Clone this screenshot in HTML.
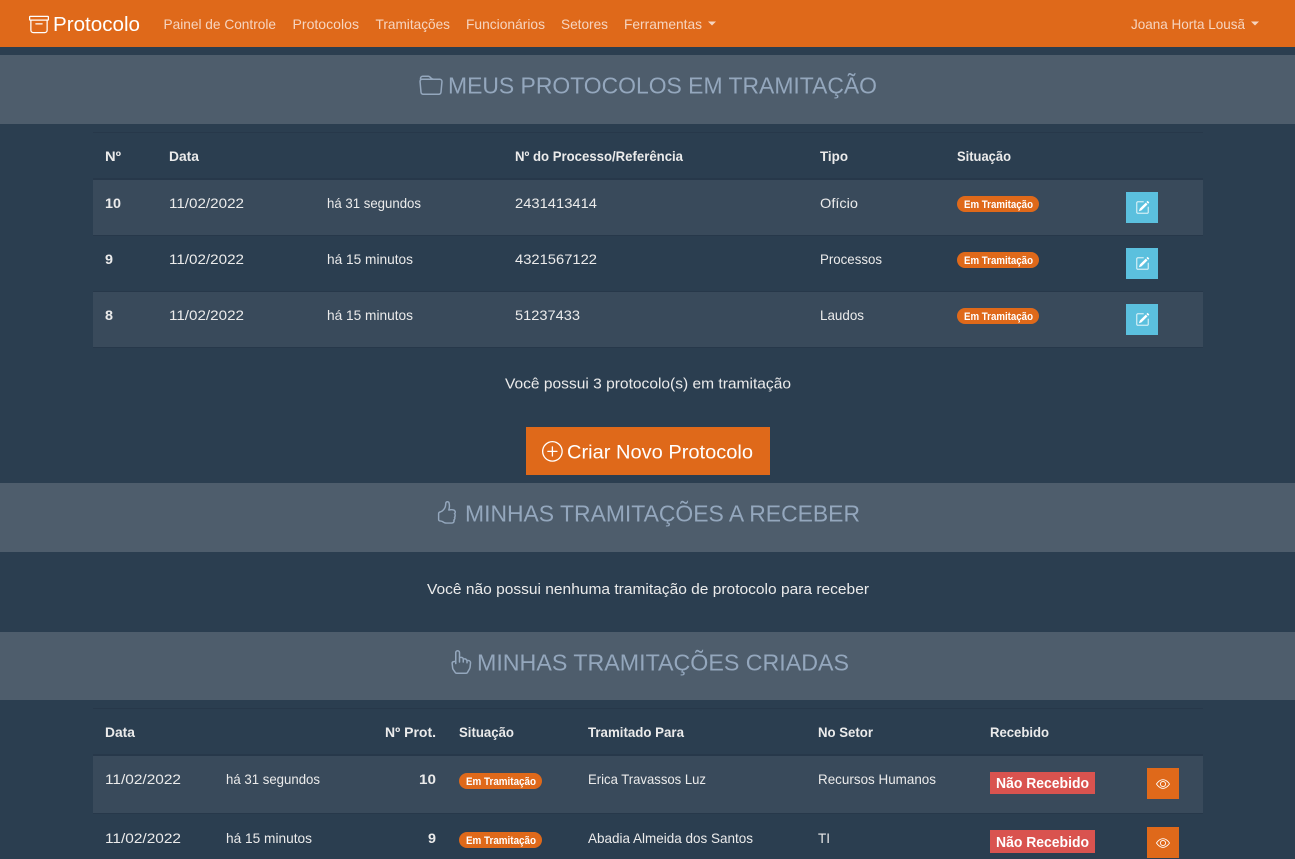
<!DOCTYPE html>
<html lang="pt-BR">
<head>
<meta charset="utf-8">
<title>Protocolo</title>
<style>
html,body{margin:0;padding:0;width:1295px;height:859px;overflow:hidden;background:#2b3e50}
svg{display:block}
text{font-family:"Liberation Sans",sans-serif;font-size:14px;fill:#ebebeb}
.n{fill:#f6d5c0}
.h{font-size:23px;fill:#94a7bd}
.b{font-weight:bold}
.t{font-size:11px;font-weight:bold;fill:#fff}
.d{font-size:15px;font-weight:bold;fill:#fff}
.m{font-size:15px}
.w{fill:#fff}
</style>
</head>
<body>
<svg width="1295" height="859" viewBox="0 0 1295 859" xmlns="http://www.w3.org/2000/svg">
<defs>
<path id="edit" fill="#fff" fill-rule="evenodd" d="M15.502 1.94a.5.5 0 0 1 0 .706L14.459 3.69l-2-2L13.502.646a.5.5 0 0 1 .707 0l1.293 1.293zm-1.75 2.456-2-2L4.939 9.21a.5.5 0 0 0-.121.196l-.805 2.414a.25.25 0 0 0 .316.316l2.414-.805a.5.5 0 0 0 .196-.12l6.813-6.814zM1 13.5A1.5 1.5 0 0 0 2.5 15h11a1.5 1.5 0 0 0 1.5-1.5v-6a.5.5 0 0 0-1 0v6a.5.5 0 0 1-.5.5h-11a.5.5 0 0 1-.5-.5v-11a.5.5 0 0 1 .5-.5H9a.5.5 0 0 0 0-1H2.5A1.5 1.5 0 0 0 1 2.5v11z"/>
<path id="eye" fill="#fff" fill-rule="evenodd" d="M16 8s-3-5.5-8-5.5S0 8 0 8s3 5.5 8 5.5S16 8 16 8zM1.173 8a13.133 13.133 0 0 1 1.66-2.043C4.12 4.668 5.88 3.5 8 3.5c2.12 0 3.879 1.168 5.168 2.457A13.133 13.133 0 0 1 14.828 8c-.058.087-.122.183-.195.288-.335.48-.83 1.12-1.465 1.755C11.879 11.332 10.119 12.5 8 12.5c-2.12 0-3.879-1.168-5.168-2.457A13.134 13.134 0 0 1 1.172 8zM8 5.5a2.5 2.5 0 1 0 0 5 2.5 2.5 0 0 0 0-5zM4.5 8a3.5 3.5 0 1 1 7 0 3.5 3.5 0 0 1-7 0z"/>
</defs>

<!-- navbar -->
<rect x="0" y="0" width="1295" height="47" fill="#df691a"/>
<g transform="translate(29,14.5) scale(1.25)"><path fill="#fff" fill-rule="evenodd" d="M0 2a1 1 0 0 1 1-1h14a1 1 0 0 1 1 1v2a1 1 0 0 1-1 1v7.5a2.5 2.5 0 0 1-2.5 2.5h-9A2.5 2.5 0 0 1 1 12.5V5a1 1 0 0 1-1-1V2zm2 3v7.5A1.5 1.5 0 0 0 3.5 14h9a1.5 1.5 0 0 0 1.5-1.5V5H2zm13-3H1v2h14V2zM5 7.5a.5.5 0 0 1 .5-.5h5a.5.5 0 0 1 0 1h-5a.5.5 0 0 1-.5-.5z"/></g>
<text x="53" y="31" style="font-size:20px" class="w" textLength="87" lengthAdjust="spacingAndGlyphs">Protocolo</text>
<text class="n" x="163.500" y="29" textLength="112.500" lengthAdjust="spacingAndGlyphs">Painel de Controle</text>
<text class="n" x="292.500" y="29" textLength="66.500" lengthAdjust="spacingAndGlyphs">Protocolos</text>
<text class="n" x="375.500" y="29" textLength="74.500" lengthAdjust="spacingAndGlyphs">Tramitações</text>
<text class="n" x="466" y="29" textLength="79" lengthAdjust="spacingAndGlyphs">Funcionários</text>
<text class="n" x="561" y="29" textLength="47" lengthAdjust="spacingAndGlyphs">Setores</text>
<text class="n" x="624" y="29" textLength="78" lengthAdjust="spacingAndGlyphs">Ferramentas</text>
<path d="M708 21.500h8l-4 4z" fill="#f6d5c0"/>
<text class="n" x="1131" y="29" textLength="114" lengthAdjust="spacingAndGlyphs">Joana Horta Lousã</text>
<path d="M1251 21.500h8l-4 4z" fill="#f6d5c0"/>

<!-- section 1 -->
<rect x="0" y="55" width="1295" height="69" fill="#4e5d6c"/>
<g transform="translate(419,74) scale(1.5)"><path fill="#94a7bd" fill-rule="evenodd" d="M.54 3.87.5 3a2 2 0 0 1 2-2h3.672a2 2 0 0 1 1.414.586l.828.828A2 2 0 0 0 9.828 3h3.982a2 2 0 0 1 1.992 2.181l-.637 7A2 2 0 0 1 13.174 14H2.826a2 2 0 0 1-1.991-1.819l-.637-7a1.99 1.99 0 0 1 .342-1.31zM2.19 4a1 1 0 0 0-.996 1.09l.637 7a1 1 0 0 0 .995.91h10.348a1 1 0 0 0 .995-.91l.637-7A1 1 0 0 0 13.81 4H2.19zm4.69-1.707A1 1 0 0 0 6.172 2H2.5a1 1 0 0 0-1 .981l.006.139C1.72 3.042 1.95 3 2.19 3h5.396l-.707-.707z"/></g>
<text class="h" x="448" y="93.500" textLength="429" lengthAdjust="spacingAndGlyphs">MEUS PROTOCOLOS EM TRAMITAÇÃO</text>

<!-- table 1 -->
<rect x="93" y="132" width="1110" height="1" fill="#27384a"/>
<rect x="93" y="178" width="1110" height="2" fill="#27384a"/>
<rect x="93" y="180" width="1110" height="55" fill="#394a5b"/>
<rect x="93" y="235" width="1110" height="1" fill="#27384a"/>
<rect x="93" y="291" width="1110" height="1" fill="#27384a"/>
<rect x="93" y="292" width="1110" height="55" fill="#394a5b"/>
<rect x="93" y="347" width="1110" height="1" fill="#27384a"/>

<text class="b" x="105" y="161" textLength="16" lengthAdjust="spacingAndGlyphs">Nº</text>
<text class="b" x="169" y="161" textLength="30" lengthAdjust="spacingAndGlyphs">Data</text>
<text class="b" x="515" y="161" textLength="168" lengthAdjust="spacingAndGlyphs">Nº do Processo/Referência</text>
<text class="b" x="820" y="161" textLength="28" lengthAdjust="spacingAndGlyphs">Tipo</text>
<text class="b" x="957" y="161" textLength="54" lengthAdjust="spacingAndGlyphs">Situação</text>

<text class="b" x="105" y="208" textLength="16" lengthAdjust="spacingAndGlyphs">10</text>
<text x="169" y="208" textLength="75" lengthAdjust="spacingAndGlyphs">11/02/2022</text>
<text x="327" y="208" textLength="94" lengthAdjust="spacingAndGlyphs">há 31 segundos</text>
<text x="515" y="208" textLength="82" lengthAdjust="spacingAndGlyphs">2431413414</text>
<text x="820" y="208" textLength="38" lengthAdjust="spacingAndGlyphs">Ofício</text>
<rect x="957" y="196" width="82" height="16" rx="8" fill="#df691a"/>
<text class="t" x="964" y="208" textLength="69" lengthAdjust="spacingAndGlyphs">Em Tramitação</text>
<rect x="1126" y="192" width="32" height="31" fill="#5bc0de"/>
<use href="#edit" transform="translate(1135.500,200.500) scale(.875)"/>

<text class="b" x="105" y="264" textLength="8" lengthAdjust="spacingAndGlyphs">9</text>
<text x="169" y="264" textLength="75" lengthAdjust="spacingAndGlyphs">11/02/2022</text>
<text x="327" y="264" textLength="86" lengthAdjust="spacingAndGlyphs">há 15 minutos</text>
<text x="515" y="264" textLength="82" lengthAdjust="spacingAndGlyphs">4321567122</text>
<text x="820" y="264" textLength="62" lengthAdjust="spacingAndGlyphs">Processos</text>
<rect x="957" y="252" width="82" height="16" rx="8" fill="#df691a"/>
<text class="t" x="964" y="264" textLength="69" lengthAdjust="spacingAndGlyphs">Em Tramitação</text>
<rect x="1126" y="248" width="32" height="31" fill="#5bc0de"/>
<use href="#edit" transform="translate(1135.500,256.500) scale(.875)"/>

<text class="b" x="105" y="320" textLength="8" lengthAdjust="spacingAndGlyphs">8</text>
<text x="169" y="320" textLength="75" lengthAdjust="spacingAndGlyphs">11/02/2022</text>
<text x="327" y="320" textLength="86" lengthAdjust="spacingAndGlyphs">há 15 minutos</text>
<text x="515" y="320" textLength="65" lengthAdjust="spacingAndGlyphs">51237433</text>
<text x="820" y="320" textLength="44" lengthAdjust="spacingAndGlyphs">Laudos</text>
<rect x="957" y="308" width="82" height="16" rx="8" fill="#df691a"/>
<text class="t" x="964" y="320" textLength="69" lengthAdjust="spacingAndGlyphs">Em Tramitação</text>
<rect x="1126" y="304" width="32" height="31" fill="#5bc0de"/>
<use href="#edit" transform="translate(1135.500,312.500) scale(.875)"/>

<text class="m" x="505" y="388.500" textLength="286" lengthAdjust="spacingAndGlyphs">Você possui 3 protocolo(s) em tramitação</text>

<!-- button -->
<rect x="526" y="427" width="244" height="48" fill="#df691a"/>
<g transform="translate(542,441) scale(1.3)"><path fill="#fff" d="M8 15A7 7 0 1 1 8 1a7 7 0 0 1 0 14zm0 1A8 8 0 1 0 8 0a8 8 0 0 0 0 16z"/><path fill="#fff" d="M8 4a.5.5 0 0 1 .5.5v3h3a.5.5 0 0 1 0 1h-3v3a.5.5 0 0 1-1 0v-3h-3a.5.5 0 0 1 0-1h3v-3A.5.5 0 0 1 8 4z"/></g>
<text class="w" x="567" y="458.500" style="font-size:19px" textLength="186" lengthAdjust="spacingAndGlyphs">Criar Novo Protocolo</text>

<!-- section 2 -->
<rect x="0" y="483" width="1295" height="69" fill="#4e5d6c"/>
<g transform="translate(435,501) scale(1.45)"><path fill="#94a7bd" d="M8.864.046C7.908-.193 7.02.53 6.956 1.466c-.072 1.051-.23 2.016-.428 2.59-.125.36-.479 1.013-1.04 1.639-.557.623-1.282 1.178-2.131 1.41C2.685 7.288 2 7.87 2 8.72v4.001c0 .845.682 1.464 1.448 1.545 1.07.114 1.564.415 2.068.723l.048.03c.272.165.578.348.97.484.397.136.861.217 1.466.217h3.5c.937 0 1.599-.477 1.934-1.064a1.86 1.86 0 0 0 .254-.912c0-.152-.023-.312-.077-.464.201-.263.38-.578.488-.901.11-.33.172-.762.004-1.149.069-.13.12-.269.159-.403.077-.27.113-.568.113-.857 0-.288-.036-.585-.113-.856a2.144 2.144 0 0 0-.138-.362 1.9 1.9 0 0 0 .234-1.734c-.206-.592-.682-1.1-1.2-1.272-.847-.282-1.803-.276-2.516-.211a9.84 9.84 0 0 0-.443.05 9.365 9.365 0 0 0-.062-4.509A1.38 1.38 0 0 0 9.125.111L8.864.046zM11.5 14.721H8c-.51 0-.863-.069-1.14-.164-.281-.097-.506-.228-.776-.393l-.04-.024c-.555-.339-1.198-.731-2.49-.868-.333-.036-.554-.29-.554-.55V8.72c0-.254.226-.543.62-.65 1.095-.3 1.977-.996 2.614-1.708.635-.71 1.064-1.475 1.238-1.978.243-.7.407-1.768.482-2.85.025-.362.36-.594.667-.518l.262.066c.16.04.258.143.288.255a8.34 8.34 0 0 1-.145 4.725.5.5 0 0 0 .595.644l.003-.001.014-.003.058-.014a8.908 8.908 0 0 1 1.036-.157c.663-.06 1.457-.054 2.11.164.175.058.45.3.57.65.107.308.087.67-.266 1.022l-.353.353.353.354c.043.043.105.141.154.315.048.167.075.37.075.581 0 .212-.027.414-.075.582-.05.174-.111.272-.154.315l-.353.353.353.354c.047.047.109.177.005.488a2.224 2.224 0 0 1-.505.805l-.353.353.353.354c.006.005.041.05.041.17a.866.866 0 0 1-.121.416c-.165.288-.503.56-1.066.56z"/></g>
<text class="h" x="465" y="521.500" textLength="395" lengthAdjust="spacingAndGlyphs">MINHAS TRAMITAÇÕES A RECEBER</text>

<text class="m" x="427" y="594" textLength="442" lengthAdjust="spacingAndGlyphs">Você não possui nenhuma tramitação de protocolo para receber</text>

<!-- section 3 -->
<rect x="0" y="632" width="1295" height="68" fill="#4e5d6c"/>
<g transform="translate(447.500,650) scale(1.5)"><path fill="#94a7bd" fill-rule="evenodd" d="M6.75 1a.75.75 0 0 1 .75.75V8a.5.5 0 0 0 1 0V5.467l.086-.004c.317-.012.637-.008.816.027.134.027.294.096.448.182.077.042.15.147.15.314V8a.5.5 0 1 0 1 0V6.435a4.9 4.9 0 0 1 .106-.01c.316-.024.584-.01.708.04.118.046.3.207.486.43.081.096.15.19.2.259V8.500a.5.5 0 0 0 1 0v-1h.342a1 1 0 0 1 .995 1.100l-.271 2.715a2.5 2.5 0 0 1-.317.991l-1.395 2.442a.5.5 0 0 1-.434.252H6.035a.5.5 0 0 1-.416-.223l-1.433-2.150a1.5 1.5 0 0 1-.243-.666l-.345-3.105a.5.5 0 0 1 .399-.546L5 8.110V9a.5.5 0 0 0 1 0V1.750A.75.75 0 0 1 6.750 1zM8.500 4.466V1.750a1.750 1.750 0 1 0-3.500 0v5.340l-1.200.24a1.500 1.500 0 0 0-1.196 1.636l.345 3.106a2.500 2.500 0 0 0 .405 1.110l1.433 2.150A1.500 1.500 0 0 0 6.035 16h6.385a1.500 1.500 0 0 0 1.302-.756l1.395-2.441a3.500 3.500 0 0 0 .444-1.389l.271-2.715a2 2 0 0 0-1.990-2.199h-.581a5.114 5.114 0 0 0-.195-.248c-.191-.229-.51-.568-.88-.716-.364-.146-.846-.132-1.158-.108l-.132.012a1.260 1.260 0 0 0-.56-.642 2.632 2.632 0 0 0-.738-.288c-.31-.062-.739-.058-1.050-.046l-.048.002z"/></g>
<text class="h" x="477" y="670.500" textLength="372" lengthAdjust="spacingAndGlyphs">MINHAS TRAMITAÇÕES CRIADAS</text>

<!-- table 2 -->
<rect x="93" y="708" width="1110" height="1" fill="#27384a"/>
<rect x="93" y="754" width="1110" height="2" fill="#27384a"/>
<rect x="93" y="756" width="1110" height="57" fill="#394a5b"/>
<rect x="93" y="813" width="1110" height="1" fill="#27384a"/>

<text class="b" x="105" y="737" textLength="30" lengthAdjust="spacingAndGlyphs">Data</text>
<text class="b" x="385" y="737" textLength="51" lengthAdjust="spacingAndGlyphs">Nº Prot.</text>
<text class="b" x="459" y="737" textLength="55" lengthAdjust="spacingAndGlyphs">Situação</text>
<text class="b" x="588" y="737" textLength="96" lengthAdjust="spacingAndGlyphs">Tramitado Para</text>
<text class="b" x="818" y="737" textLength="55" lengthAdjust="spacingAndGlyphs">No Setor</text>
<text class="b" x="990" y="737" textLength="59" lengthAdjust="spacingAndGlyphs">Recebido</text>

<text x="105" y="784" textLength="76" lengthAdjust="spacingAndGlyphs">11/02/2022</text>
<text x="226" y="784" textLength="94" lengthAdjust="spacingAndGlyphs">há 31 segundos</text>
<text class="b" x="419" y="784" textLength="17" lengthAdjust="spacingAndGlyphs">10</text>
<rect x="459" y="773" width="83" height="16" rx="8" fill="#df691a"/>
<text class="t" x="466" y="785" textLength="70" lengthAdjust="spacingAndGlyphs">Em Tramitação</text>
<text x="588" y="784" textLength="118" lengthAdjust="spacingAndGlyphs">Erica Travassos Luz</text>
<text x="818" y="784" textLength="118" lengthAdjust="spacingAndGlyphs">Recursos Humanos</text>
<rect x="990" y="772" width="105" height="22" fill="#d9534f"/>
<text class="d" x="996" y="788" textLength="93" lengthAdjust="spacingAndGlyphs">Não Recebido</text>
<rect x="1147" y="768" width="32" height="31" fill="#df691a"/>
<use href="#eye" transform="translate(1156,777) scale(.875)"/>

<text x="105" y="843" textLength="76" lengthAdjust="spacingAndGlyphs">11/02/2022</text>
<text x="226" y="843" textLength="86" lengthAdjust="spacingAndGlyphs">há 15 minutos</text>
<text class="b" x="428" y="843" textLength="8" lengthAdjust="spacingAndGlyphs">9</text>
<rect x="459" y="832" width="83" height="16" rx="8" fill="#df691a"/>
<text class="t" x="466" y="844" textLength="70" lengthAdjust="spacingAndGlyphs">Em Tramitação</text>
<text x="588" y="843" textLength="165" lengthAdjust="spacingAndGlyphs">Abadia Almeida dos Santos</text>
<text x="818" y="843" textLength="12" lengthAdjust="spacingAndGlyphs">TI</text>
<rect x="990" y="830" width="105" height="23" fill="#d9534f"/>
<text class="d" x="996" y="847" textLength="93" lengthAdjust="spacingAndGlyphs">Não Recebido</text>
<rect x="1147" y="827" width="32" height="31" fill="#df691a"/>
<use href="#eye" transform="translate(1156,836) scale(.875)"/>
</svg>
</body>
</html>
